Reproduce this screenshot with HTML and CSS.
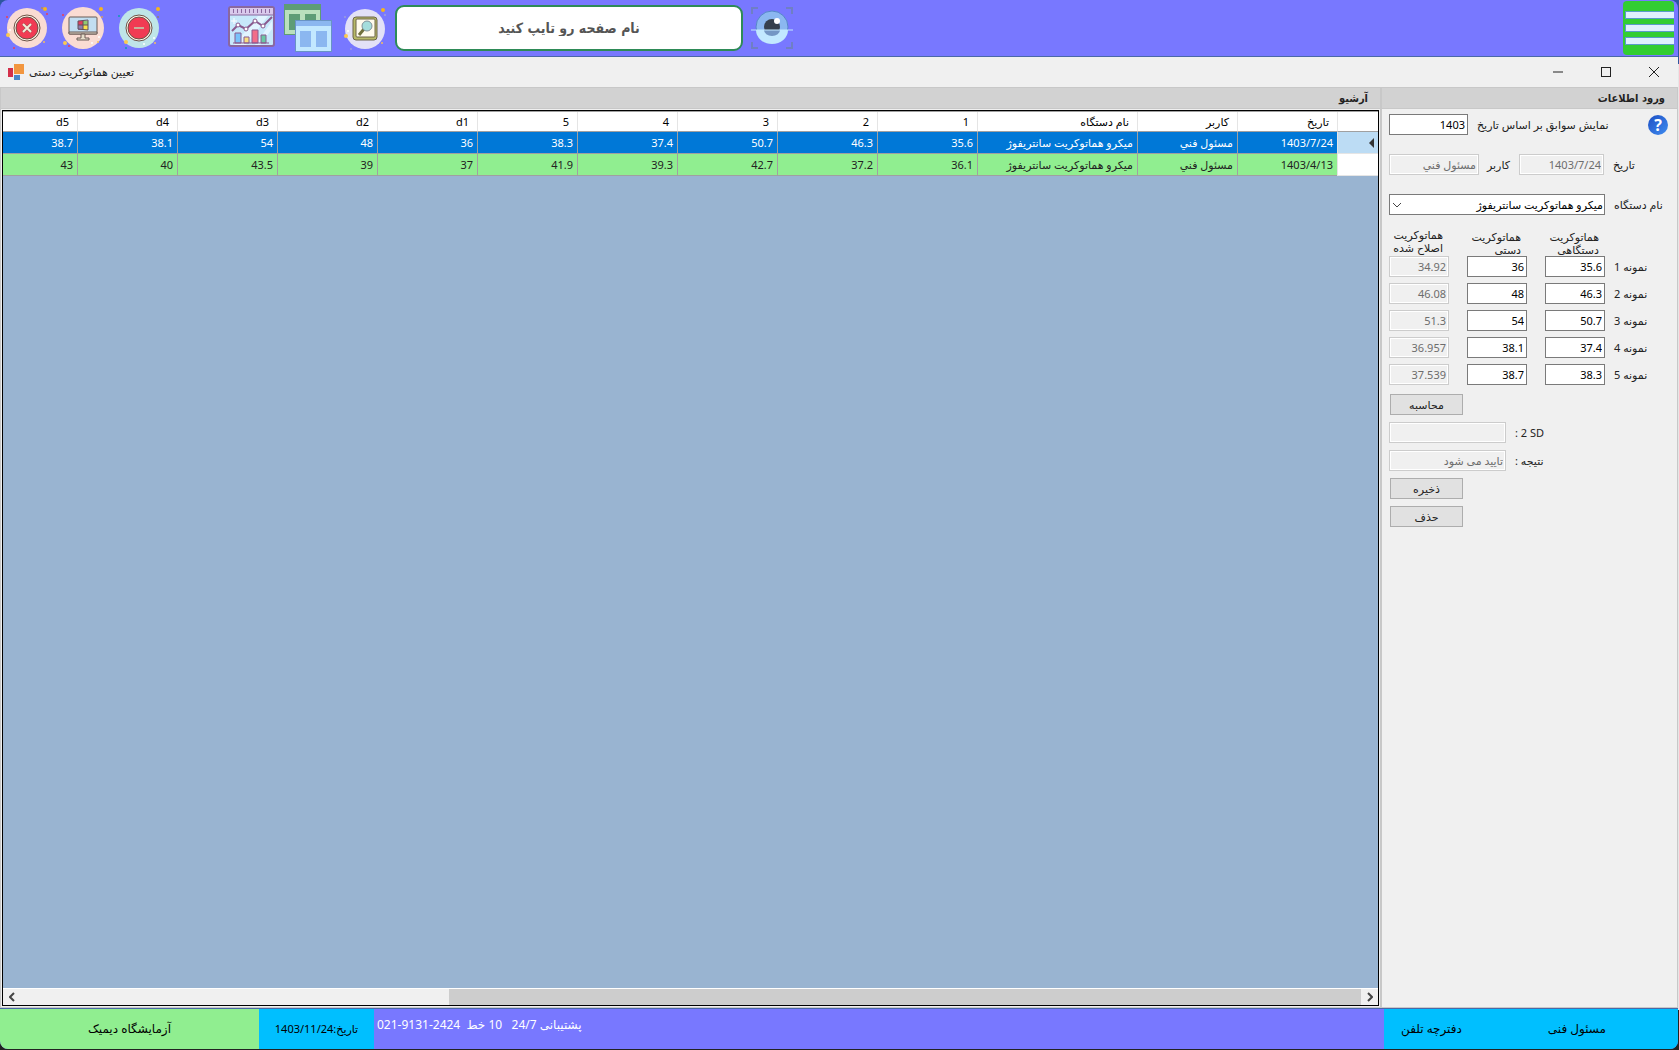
FILE: index.html
```html
<!DOCTYPE html>
<html lang="fa">
<head>
    <meta charset="UTF-8">
    <meta name="viewport" content="width=device-width, initial-scale=1.0">
    <title>تعیین هماتوکریت دستی</title>
    <link rel="stylesheet" href="styles.css">
</head>
<body>
<div class="shell">

    <header class="topbar">
        <div class="session">
            <button class="icon-btn" aria-label="خروج">
                <svg width="44" height="44" viewBox="0 0 44 44">
                    <circle cx="22" cy="22" r="20" fill="#fadcd3"/>
                    <circle cx="22" cy="22" r="13" fill="#fff8ea" stroke="#6b5145"/>
                    <circle cx="22" cy="22" r="11" fill="#f13b53" stroke="#6b5145"/>
                    <path d="M18 18l8 8M26 18l-8 8" stroke="#8b5a50" stroke-width="3"/>
                    <path d="M18 18l8 8M26 18l-8 8" stroke="#f5ebda" stroke-width="2"/>
                    <circle cx="40" cy="3" r="2" fill="#f6b51d"/><circle cx="37" cy="2" r="1" fill="#b48a58"/>
                    <circle cx="42" cy="8" r="1" fill="#ee3e54"/><circle cx="2" cy="11" r="1" fill="#ee3e54"/>
                    <circle cx="3" cy="29" r="2" fill="#fbc94f"/><circle cx="5" cy="24" r="1" fill="#fff"/>
                    <circle cx="39" cy="36" r="1" fill="#f4bd62"/><circle cx="9" cy="42" r="1" fill="#ee3e54"/>
                </svg>
            </button>
            <button class="icon-btn" aria-label="دسکتاپ">
                <svg width="44" height="44" viewBox="0 0 44 44">
                    <circle cx="22" cy="22" r="21" fill="#fadcd3"/>
                    <rect x="8" y="11" width="28" height="17" rx="1" fill="#c2def1" stroke="#6b5a55"/>
                    <path d="M8 26h28v2H8z" fill="#d9d3c5" stroke="#6b5a55"/>
                    <path d="M20 28h4v4h4v2H16v-2h4z" fill="#e5ddca" stroke="#6b5a55"/>
                    <path d="M17 15h5v4h-5z" fill="#e33e5c"/><path d="M22 15h5v4h-5z" fill="#91c973"/>
                    <path d="M17 19h5v5h-5z" fill="#8f80ae"/><path d="M22 19h5v5h-5z" fill="#fae34c"/>
                    <path d="M17 15l10-1v10l-10-1zM17 19h10M22 15v9" fill="none" stroke="#64505a"/>
                    <circle cx="40" cy="3" r="2" fill="#f6b51d"/><circle cx="41" cy="11" r="1" fill="#d49e61"/>
                    <circle cx="2" cy="9" r="1" fill="#ee3e54"/><circle cx="4" cy="37" r="2" fill="#fbc94f"/>
                    <circle cx="8" cy="40" r="1" fill="#ee3e54"/><circle cx="31" cy="37" r="1" fill="#fff"/>
                    <circle cx="37" cy="36" r="1" fill="#f6c35b"/><circle cx="38" cy="31" r="1" fill="#fff"/>
                </svg>
            </button>
            <button class="icon-btn" aria-label="کوچک کردن">
                <svg width="44" height="44" viewBox="0 0 44 44">
                    <circle cx="22" cy="22" r="20" fill="#bfe5e8"/>
                    <circle cx="22" cy="22" r="13" fill="#fff8ea" stroke="#6b5145"/>
                    <circle cx="22" cy="22" r="11" fill="#f13b53" stroke="#6b5145"/>
                    <path d="M17 22h10" stroke="#c9b09b" stroke-width="2"/>
                    <circle cx="41" cy="3" r="2" fill="#f6b51d"/><circle cx="41" cy="11" r="1" fill="#8d7e80"/>
                    <circle cx="2" cy="10" r="1" fill="#109bb4"/><circle cx="9" cy="36" r="2" fill="#fbc94f"/>
                    <circle cx="9" cy="42" r="1" fill="#109bb4"/><circle cx="27" cy="38" r="1" fill="#fff"/>
                    <circle cx="37" cy="32" r="1" fill="#fff"/><circle cx="38" cy="37" r="1" fill="#f4bd62"/>
                </svg>
            </button>
        </div>

        <div class="tools">
            <button class="icon-btn" aria-label="نمودار">
                <svg width="48" height="48" viewBox="0 0 48 48">
                    <rect x="1" y="3" width="45" height="39" rx="2" fill="#c7e8fb" stroke="#8a689f" stroke-width="2"/>
                    <path d="M30 12h10L18 41H6zM44 17v8L32 41h-5z" fill="#e2f4ff"/>
                    <path d="M2 4h43v7H2z" fill="#d9c9ec"/>
                    <path d="M2 11h43" stroke="#8a689f" stroke-width="1"/>
                    <path d="M5 7h39" stroke="#8a689f" stroke-width="4" stroke-dasharray="1 3"/>
                    <path d="M6 6v6M3 9h6" stroke="#fff" transform="translate(0 8)"/>
                    <path d="M4 27l6-6 8 4 9-8 8 5 9-9" fill="none" stroke="#8a5a8e" stroke-width="2"/>
                    <circle cx="10" cy="21" r="2" fill="#fff" stroke="#8a5a8e"/><circle cx="18" cy="25" r="2" fill="#fff" stroke="#8a5a8e"/>
                    <circle cx="27" cy="17" r="2" fill="#fff" stroke="#8a5a8e"/><circle cx="35" cy="22" r="2" fill="#fff" stroke="#8a5a8e"/>
                    <g stroke="#8a5a8e">
                        <path d="M7 29h6v10H7z" fill="#78c2fb"/><path d="M16 33h5v6h-5z" fill="#f8df82"/>
                        <path d="M24 26h6v13h-6z" fill="#f16d8a"/><path d="M33 31h5v8h-5z" fill="#69c9a4"/>
                        <path d="M5 39h36"/>
                    </g>
                </svg>
            </button>
            <button class="icon-btn" aria-label="پنجره‌ها">
                <svg width="50" height="50" viewBox="0 0 50 50">
                    <path d="M0 1h37v31H0z" fill="#5e9c76"/><path d="M1 7h35v24H1z" fill="#bae0bd"/>
                    <path d="M5 11h11v16H5zM21 11h11v16H21z" fill="#5e9c76"/>
                    <path d="M11 17h37v32H11z" fill="#6993c5"/><path d="M12 18h35v5H12z" fill="#8bb7f0"/>
                    <path d="M12 23h35v25H12z" fill="#c2e8ff"/>
                    <path d="M16 28h11v16H16zM32 28h11v16H32z" fill="#8bb7f0"/>
                </svg>
            </button>
            <button class="icon-btn" aria-label="جستجو">
                <svg width="45" height="45" viewBox="0 0 45 45">
                    <circle cx="23" cy="23" r="20" fill="#e3e1f7"/>
                    <rect x="11" y="11" width="24" height="23" rx="3" fill="#b7b968" stroke="#6c6549"/>
                    <rect x="14" y="13" width="19" height="18" rx="1" fill="#fffbed" stroke="#6c6549"/>
                    <path d="M17 29l5-6" stroke="#71713d" stroke-width="3"/>
                    <circle cx="25" cy="20" r="5" fill="#a4dddc" stroke="#81909a"/>
                    <circle cx="41" cy="4" r="2" fill="#f6b51d"/><circle cx="43" cy="9" r="1" fill="#a3a1d5"/>
                    <circle cx="3" cy="11" r="1" fill="#9d9cda"/><circle cx="4" cy="30" r="2" fill="#fbc94f"/>
                    <circle cx="6" cy="25" r="1" fill="#fff"/><circle cx="40" cy="37" r="1" fill="#f4bd62"/><circle cx="9" cy="43" r="1" fill="#9d9cda"/>
                </svg>
            </button>
            <input class="page-search" type="text" dir="rtl" aria-label="نام صفحه" placeholder="نام صفحه رو تایپ کنید">
            <button class="icon-btn" aria-label="نمایش">
                <svg width="42" height="42" viewBox="0 0 42 42">
                    <path d="M1 7V1h6M35 1h6v6M41 35v6h-6M7 41H1v-6" fill="none" stroke="#6f7fc4" stroke-width="2"/>
                    <circle cx="21" cy="20" r="16" fill="#8bb7f0" stroke="#5687c9"/>
                    <path d="M5 23h32a16 14 0 0 1-32 0z" fill="#c2e8ff"/>
                    <circle cx="21" cy="20" r="8" fill="#36404d"/>
                    <path d="M13 23h16a8 6 0 0 1-16 0z" fill="#7496c4"/>
                    <circle cx="26" cy="14" r="3" fill="#fff"/>
                    <path d="M0 23h42" stroke="#c2e8ff"/>
                </svg>
            </button>
        </div>

        <button class="menu-btn" aria-label="منو">
            <span></span><span></span><span></span>
        </button>
    </header>

    <div class="titlebar">
        <svg width="16" height="16" viewBox="0 0 16 16">
            <path d="M6 0h10v10H6z" fill="#f2963f"/><path d="M0 4h5v9H0z" fill="#d3304a"/><path d="M6 11h6v5H6z" fill="#4a87c8"/>
        </svg>
        <h1 class="window-title" dir="rtl">تعیین هماتوکریت دستی</h1>
        <div class="window-buttons">
            <button aria-label="کمینه"><svg width="12" height="12"><path d="M1 6h10" stroke="#222"/></svg></button>
            <button aria-label="بیشینه"><svg width="12" height="12"><rect x="1.500" y="1.500" width="9" height="9" fill="none" stroke="#222"/></svg></button>
            <button aria-label="بستن"><svg width="12" height="12"><path d="M1 1l10 10M11 1L1 11" stroke="#222"/></svg></button>
        </div>
    </div>

    <main class="workspace" dir="rtl">
        <!-- Entry form -->
        <section class="group entry">
            <h2>ورود اطلاعات</h2>
            <form class="entry-form">
                <div class="row">
                    <button type="button" class="help-btn" aria-label="راهنما">?</button>
                    <label for="year">نمایش سوابق بر اساس تاریخ</label>
                    <input class="w-year" type="text" id="year" value="1403">
                </div>
                <div class="row spaced">
                    <label for="date">تاریخ</label>
                    <input class="w-date" type="text" id="date" value="1403/7/24" disabled>
                    <label class="user-label" for="user">کاربر</label>
                    <input class="w-user" type="text" id="user" value="مسئول فني" disabled>
                </div>
                <div class="row spaced">
                    <label for="device">نام دستگاه</label>
                    <div class="combo">
                        <select id="device"><option>میکرو هماتوکریت سانتریفوژ</option></select>
                        <svg width="10" height="6"><path d="M1 1l4 4 4-4" fill="none" stroke="#444"/></svg>
                    </div>
                </div>

                <div class="samples">
                    <div class="row heads">
                        <div class="triple">
                            <span>هماتوکریت دستگاهی</span>
                            <span>هماتوکریت دستی</span>
                            <span class="corrected">هماتوکریت اصلاح شده</span>
                        </div>
                    </div>
                    <div class="row">
                        <label for="s1">نمونه 1</label>
                        <div class="triple">
                            <input type="text" id="s1" value="35.6">
                            <input type="text" aria-label="دستی 1" value="36">
                            <input type="text" aria-label="اصلاح شده 1" value="34.92" disabled>
                        </div>
                    </div>
                    <div class="row">
                        <label for="s2">نمونه 2</label>
                        <div class="triple">
                            <input type="text" id="s2" value="46.3">
                            <input type="text" aria-label="دستی 2" value="48">
                            <input type="text" aria-label="اصلاح شده 2" value="46.08" disabled>
                        </div>
                    </div>
                    <div class="row">
                        <label for="s3">نمونه 3</label>
                        <div class="triple">
                            <input type="text" id="s3" value="50.7">
                            <input type="text" aria-label="دستی 3" value="54">
                            <input type="text" aria-label="اصلاح شده 3" value="51.3" disabled>
                        </div>
                    </div>
                    <div class="row">
                        <label for="s4">نمونه 4</label>
                        <div class="triple">
                            <input type="text" id="s4" value="37.4">
                            <input type="text" aria-label="دستی 4" value="38.1">
                            <input type="text" aria-label="اصلاح شده 4" value="36.957" disabled>
                        </div>
                    </div>
                    <div class="row">
                        <label for="s5">نمونه 5</label>
                        <div class="triple">
                            <input type="text" id="s5" value="38.3">
                            <input type="text" aria-label="دستی 5" value="38.7">
                            <input type="text" aria-label="اصلاح شده 5" value="37.539" disabled>
                        </div>
                    </div>
                </div>

                <div class="results">
                    <div class="row"><button type="button" class="btn">محاسبه</button></div>
                    <div class="row">
                        <label for="sd"><bdi dir="ltr">2 SD</bdi> :</label>
                        <input class="w-result" type="text" id="sd" disabled>
                    </div>
                    <div class="row">
                        <label for="result">نتیجه :</label>
                        <input class="w-result" type="text" id="result" value="تایید می شود" disabled>
                    </div>
                    <div class="row"><button type="button" class="btn">ذخیره</button></div>
                    <div class="row"><button type="button" class="btn">حذف</button></div>
                </div>
            </form>
        </section>

        <!-- Archive grid -->
        <section class="group archive">
            <h2>آرشیو</h2>
            <div class="grid">
                <div class="grid-view">
                    <table>
                        <colgroup>
                            <col class="c-head"><col><col><col class="c-device">
                            <col><col><col><col><col><col><col><col><col><col>
                        </colgroup>
                        <thead>
                            <tr><th></th><th>تاریخ</th><th>کاربر</th><th>نام دستگاه</th><th>1</th><th>2</th><th>3</th><th>4</th><th>5</th><th>d1</th><th>d2</th><th>d3</th><th>d4</th><th>d5</th></tr>
                        </thead>
                        <tbody>
                            <tr class="selected"><td class="marker"><svg width="5" height="10"><path d="M5 0v10L0 5z" fill="#333"/></svg></td><td>1403/7/24</td><td>مسئول فني</td><td>میکرو هماتوکریت سانتریفوژ</td><td>35.6</td><td>46.3</td><td>50.7</td><td>37.4</td><td>38.3</td><td>36</td><td>48</td><td>54</td><td>38.1</td><td>38.7</td></tr>
                            <tr><td class="marker"></td><td>1403/4/13</td><td>مسئول فني</td><td>میکرو هماتوکریت سانتریفوژ</td><td>36.1</td><td>37.2</td><td>42.7</td><td>39.3</td><td>41.9</td><td>37</td><td>39</td><td>43.5</td><td>40</td><td>43</td></tr>
                        </tbody>
                    </table>
                </div>
                <div class="scrollbar" dir="ltr">
                    <button aria-label="چپ"><svg width="6" height="10"><path d="M5 1L1 5l4 4" fill="none" stroke="#444" stroke-width="2"/></svg></button>
                    <div class="track"><div class="thumb"></div></div>
                    <button aria-label="راست"><svg width="6" height="10"><path d="M1 1l4 4-4 4" fill="none" stroke="#444" stroke-width="2"/></svg></button>
                </div>
            </div>
        </section>
    </main>

    <footer class="statusbar">
        <div class="lab" dir="rtl">آزمایشگاه دیمیک</div>
        <div class="today" dir="rtl">تاریخ:1403/11/24</div>
        <div class="support" dir="rtl">پشتیبانی 24/7   10 خط  <bdi dir="ltr">021-9131-2424</bdi></div>
        <div class="account">
            <button>دفترچه تلفن</button>
            <button class="user-btn">مسئول فنی</button>
        </div>
    </footer>

</div>
</body>
</html>
```
FILE: styles.css
```css
* {
    box-sizing: border-box;
}

body {
    margin: 0;
    font-family: "Noto Sans", "DejaVu Sans", sans-serif;
    font-size: 11px;
    line-height: 14px;
    color: #222;
    background: linear-gradient(#2d56a0 64px, #e6e6e6 64px, #e6e6e6 calc(100% - 40px), #222 calc(100% - 40px));
}

button,
input,
select {
    font: inherit;
    color: inherit;
}

button {
    padding: 0;
    border: none;
    background: none;
    cursor: pointer;
}

svg {
    display: block;
}

.shell {
    display: flex;
    flex-direction: column;
    height: 100vh;
    padding: 0 1px 1px 0;
}

/* Top bar */
.topbar {
    display: flex;
    align-items: center;
    height: 57px;
    padding: 0 4px 0 5px;
    background: #7878ff;
    border-bottom: 1px solid #4a68a8;
    border-radius: 8px 8px 0 0;
}

.session {
    display: flex;
    gap: 12px;
    margin-right: 67px;
}

.tools {
    display: flex;
    align-items: center;
    gap: 8px;
}

.page-search {
    width: 348px;
    height: 46px;
    border: 2px solid #2e8b57;
    border-radius: 9px;
    background: #fff;
    font-family: "DejaVu Sans Condensed", "DejaVu Sans", sans-serif;
    font-size: 14px;
    font-weight: bold;
    text-align: center;
    outline: none;
}

.page-search::placeholder {
    color: #555;
    opacity: 1;
}

.menu-btn {
    display: flex;
    flex-direction: column;
    align-items: flex-end;
    justify-content: center;
    gap: 5px;
    width: 51px;
    height: 54px;
    margin-left: auto;
    border-radius: 4px;
    background: #32cd32;
}

.menu-btn span {
    width: 49px;
    height: 8px;
    background: #dff0fe;
    border: 1px solid #5a9bc8;
    border-right: none;
}

/* Window title */
.titlebar {
    display: flex;
    align-items: center;
    height: 30px;
    padding-left: 8px;
    background: #f0f0f0;
}

.window-title {
    margin: 0 0 0 5px;
    font-size: 11px;
    font-weight: normal;
}

.window-buttons {
    display: flex;
    margin-left: auto;
}

.window-buttons button {
    display: flex;
    align-items: center;
    justify-content: center;
    width: 48px;
    height: 30px;
}

/* Groups */
.workspace {
    flex: 1;
    min-height: 0;
    display: flex;
    background: #f0f0f0;
}

.group {
    display: flex;
    flex-direction: column;
    border: 1px solid #c8c8c8;
}

.group h2 {
    margin: 0;
    height: 21px;
    padding: 0 12px;
    font-family: "DejaVu Sans Condensed", "DejaVu Sans", sans-serif;
    font-size: 11px;
    line-height: 21px;
    background: #d2d2d2;
    border-bottom: 1px solid #c8c8c8;
}

.entry {
    width: 297px;
}

.archive {
    flex: 1;
    min-width: 0;
}

/* Entry form */
.entry-form {
    display: flex;
    flex-direction: column;
    padding: 5px 9px 0 7px;
}

.row {
    display: flex;
    align-items: center;
    justify-content: flex-end;
    gap: 9px;
}

.row.spaced {
    margin-top: 19px;
}

.entry-form label {
    white-space: nowrap;
}

.entry-form input {
    height: 21px;
    padding: 0 2px;
    border: 1px solid #7a7a7a;
    background: #fff;
    color: #000;
    text-align: right;
}

.entry-form input:disabled {
    border-color: #ccc;
    background: #f0f0f0;
    box-shadow: inset 0 0 0 1px #fff;
    color: #6d6d6d;
}

.help-btn {
    width: 20px;
    height: 20px;
    margin-left: auto;
    border-radius: 50%;
    background: linear-gradient(135deg, #1d4fc4, #3f8cf0);
    color: #fff;
    font-size: 16px;
    font-weight: bold;
    line-height: 20px;
}

.user-label {
    width: 22px;
}

.w-year {
    width: 79px;
}

.w-date {
    width: 85px;
}

.w-user {
    width: 90px;
}

.w-result {
    width: 117px;
}

.combo {
    position: relative;
    width: 216px;
}

.combo select {
    display: block;
    width: 100%;
    height: 21px;
    padding: 0 1px 0 18px;
    border: 1px solid #7a7a7a;
    border-radius: 0;
    background: #fff;
    color: #000;
    appearance: none;
}

.combo svg {
    position: absolute;
    left: 3px;
    top: 8px;
    pointer-events: none;
}

.samples {
    display: flex;
    flex-direction: column;
    gap: 6px;
    margin-top: 13px;
}

.heads {
    line-height: 13px;
    margin-bottom: -6px;
}

.triple {
    display: flex;
    gap: 18px;
}

.triple input {
    width: 60px;
}

.heads .triple {
    height: 28px;
    align-items: flex-end;
}

.heads span {
    width: 60px;
    padding-right: 6px;
}

.heads .corrected {
    align-self: flex-start;
}

.results {
    display: flex;
    flex-direction: column;
    gap: 7px;
    margin-top: 9px;
}

.btn {
    width: 73px;
    height: 21px;
    margin-left: 1px;
    border: 1px solid #adadad;
    background: #e1e1e1;
}

/* Archive grid */
.grid {
    flex: 1;
    min-height: 0;
    display: flex;
    flex-direction: column;
    margin: 1px;
    border: 1px solid #000;
    background: #99b4d1;
}

.grid-view {
    flex: 1;
    overflow: hidden;
    border-top: 1px solid #a0a0a0;
}

.grid table {
    width: 1401px;
    table-layout: fixed;
    border-collapse: separate;
    border-spacing: 0;
}

.grid col {
    width: 100px;
}

.grid .c-head {
    width: 41px;
}

.grid .c-device {
    width: 160px;
}

.grid th,
.grid td {
    padding: 0 4px;
    text-align: right;
    white-space: nowrap;
    overflow: hidden;
}

.grid th {
    height: 20px;
    padding: 0 8px;
    font-weight: normal;
    color: #000;
    background: #fff;
    border-left: 1px solid #e5e5e5;
    border-bottom: 1px solid #a0a0a0;
}

.grid td {
    height: 22px;
    background: #90ee90;
    border-left: 1px solid #a0a0a0;
    border-bottom: 1px solid #a0a0a0;
}

.grid .selected td {
    background: #0078d7;
    color: #fff;
}

.grid .marker {
    background: #fff;
    border-color: #e5e5e5;
}

.grid .selected .marker {
    background: #bcdcf4;
}

.scrollbar {
    display: flex;
    height: 17px;
    border-top: 1px solid #fff;
    background: #f0f0f0;
}

.scrollbar button {
    display: flex;
    align-items: center;
    justify-content: center;
    width: 17px;
}

.track {
    flex: 1;
}

.thumb {
    width: 68%;
    height: 100%;
    margin-left: auto;
    background: #cdcdcd;
}

/* Status bar */
.statusbar {
    display: flex;
    height: 41px;
    border-top: 1px solid #4a68a8;
    border-radius: 0 0 8px 8px;
    overflow: hidden;
    background: #7878ff;
    font-size: 12px;
    color: #000;
}

.lab,
.today {
    display: flex;
    align-items: center;
    justify-content: center;
}

.lab {
    width: 259px;
    background: #90ee90;
}

.today {
    width: 115px;
    background: #00bfff;
    font-size: 11px;
}

.support {
    padding: 9px 3px;
    white-space: pre;
    color: #fff;
}

.account {
    display: flex;
    width: 294px;
    margin-left: auto;
    padding-left: 17px;
    gap: 86px;
    background: #00bfff;
}
```
